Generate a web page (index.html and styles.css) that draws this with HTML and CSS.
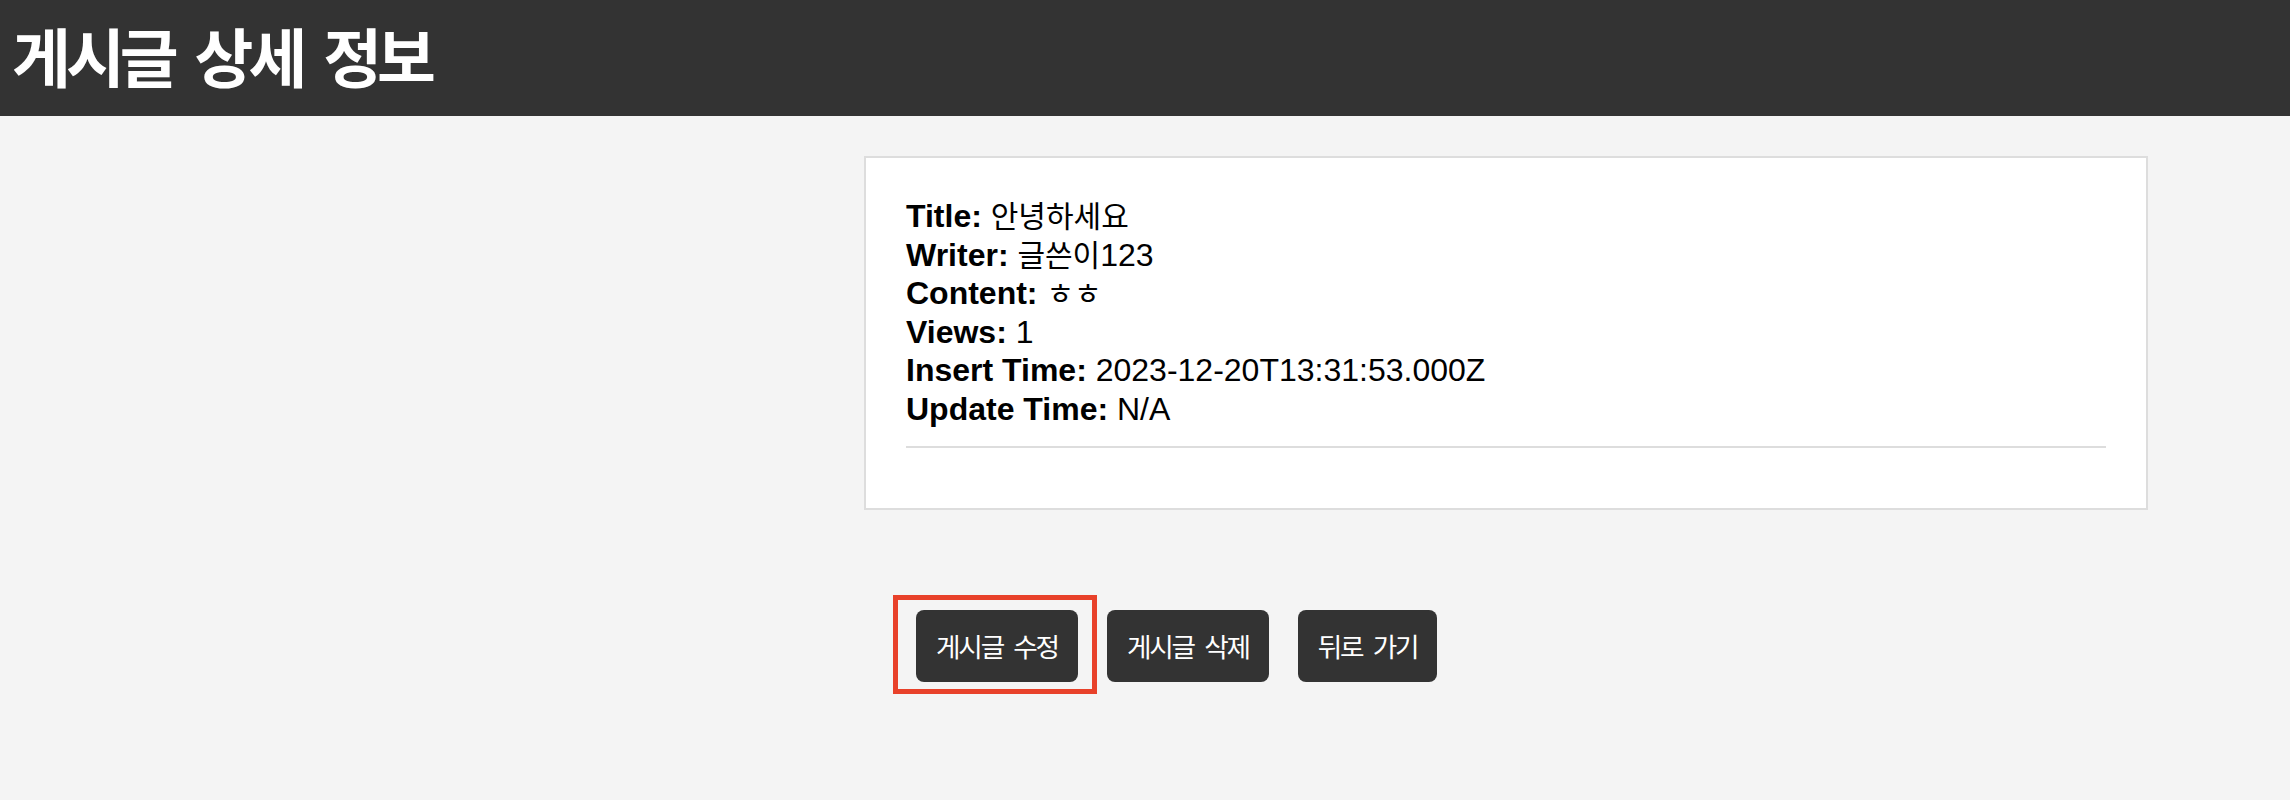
FILE: index.html
```html
<!DOCTYPE html>
<html lang="ko">
<head>
<meta charset="utf-8">
<title>게시글 상세 정보</title>
<link rel="stylesheet" href="styles.css">
</head>
<body>
<header class="topbar">
  <h1 class="topbar-title">게시글 상세 정보</h1>
</header>
<main class="page">
  <section class="detail-card">
    <div class="field"><b>Title:</b> <span class="ko">안녕하세요</span></div>
    <div class="field"><b>Writer:</b> <span class="ko">글쓴이</span>123</div>
    <div class="field"><b>Content:</b> <span class="ko">ㅎㅎ</span></div>
    <div class="field"><b>Views:</b> 1</div>
    <div class="field"><b>Insert Time:</b> 2023-12-20T13:31:53.000Z</div>
    <div class="field"><b>Update Time:</b> N/A</div>
    <hr class="divider">
  </section>
  <div class="actions">
    <span class="highlighted">
      <button class="btn" type="button">게시글 수정</button>
      <span class="highlight-box"></span>
    </span>
    <button class="btn" type="button">게시글 삭제</button>
    <button class="btn" type="button">뒤로 가기</button>
  </div>
</main>
</body>
</html>
```
FILE: styles.css
```css
html, body {
  margin: 0;
  padding: 0;
}
body {
  background: #f4f4f4;
  font-family: "Liberation Sans", "Noto Sans CJK KR", sans-serif;
  color: #000;
  width: 2290px;
  height: 800px;
  overflow: hidden;
}
.topbar {
  background: #333333;
  height: 116px;
  display: flex;
  align-items: center;
  padding: 0 0 0 12px;
  box-sizing: border-box;
}
.topbar-title {
  margin: 0;
  color: #fff;
  font-family: "Noto Sans CJK KR", sans-serif;
  font-weight: 700;
  font-size: 64px;
  line-height: 1;
  letter-spacing: -5px;
  word-spacing: 8px;
  padding-bottom: 8px;
}
.page {
  display: grid;
  grid-template-columns: 864px 1284px;
  padding-top: 40px;
}
.detail-card {
  grid-column: 2;
  background: #fff;
  border: 2px solid #dddddd;
  padding: 39px 40px 40px 40px;
}
.field {
  font-size: 32px;
  line-height: 38.6px;
  height: 38.6px;
  white-space: nowrap;
}
.field b {
  font-weight: 700;
}
.ko {
  display: inline-block;
  font-family: "Noto Sans CJK KR", sans-serif;
  font-size: 30px;
  line-height: 30px;
  letter-spacing: 0;
}
.divider {
  border: none;
  border-top: 2px solid #dddddd;
  height: 0;
  margin: 17px 0 20px;
}
.actions {
  grid-column: 2;
  display: flex;
  gap: 29px;
  margin-top: 100px;
  padding-left: 52px;
}
.highlighted {
  position: relative;
  display: inline-flex;
}
.highlight-box {
  position: absolute;
  left: -23px;
  top: -15px;
  right: -19px;
  bottom: -12px;
  border: 5px solid #e8412a;
  pointer-events: none;
}
.btn {
  background: #333333;
  color: #fff;
  border: none;
  border-radius: 8px;
  height: 72px;
  padding: 0 20px;
  font-family: "Noto Sans CJK KR", sans-serif;
  font-size: 26.67px;
  font-weight: 400;
  letter-spacing: -2.2px;
  word-spacing: 5px;
  cursor: pointer;
}
```
